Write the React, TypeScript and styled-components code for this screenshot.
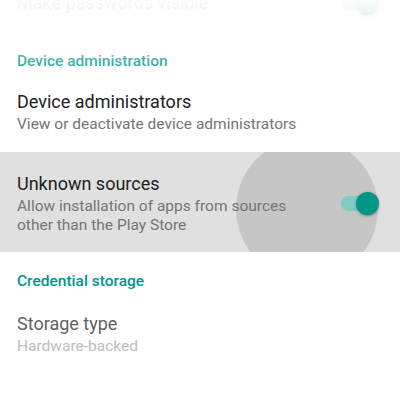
import styled, { createGlobalStyle } from 'styled-components';

const GlobalStyle = createGlobalStyle`
  html, body {
    margin: 0;
    padding: 0;
    background: #fff;
    overflow: hidden;
  }
  body {
    font-family: Roboto, "Noto Sans", sans-serif;
  }
`;

const teal = '#009688';

const Screen = styled.div`
  position: relative;
  width: 400px;
  height: 400px;
  overflow: hidden;
  background: #fff;
`;

const List = styled.div`
  display: flex;
  flex-direction: column;
  margin-top: -28px;
`;

const Row = styled.div<{ $top: number; $bottom: number; $pressed?: boolean }>`
  position: relative;
  display: flex;
  align-items: center;
  padding: ${(p) => p.$top}px 25px ${(p) => p.$bottom}px 17px;
  overflow: hidden;
  background: ${(p) => (p.$pressed ? '#e0e0e0' : 'transparent')};
`;

const TextBlock = styled.div`
  position: relative;
  flex: 1;
  display: flex;
  flex-direction: column;
`;

const Title = styled.div<{ $muted?: boolean }>`
  font-size: 18px;
  line-height: 22px;
  color: ${(p) => (p.$muted ? '#616161' : '#212121')};
`;

const Summary = styled.div<{ $muted?: boolean }>`
  font-size: 15.5px;
  line-height: 18.5px;
  margin-top: 2px;
  color: ${(p) => (p.$muted ? '#bdbdbd' : '#757575')};
  max-width: 290px;
`;

const Category = styled.div<{ $top: number }>`
  padding: ${(p) => p.$top}px 17px 0;
  font-size: 15.5px;
  line-height: 20px;
  font-weight: 500;
  color: ${teal};
`;

const Ripple = styled.div`
  position: absolute;
  left: 236px;
  top: -14px;
  width: 142px;
  height: 142px;
  border-radius: 50%;
  background: #c6c6c6;
`;

const Switch = styled.div<{ $on?: boolean }>`
  position: relative;
  width: 34px;
  height: 15px;
  flex: none;
  border-radius: 8px;
  background: ${(p) => (p.$on ? '#80cbc4' : '#bdbdbd')};
`;

const Thumb = styled.div<{ $on?: boolean }>`
  position: absolute;
  top: -4px;
  left: ${(p) => (p.$on ? '15px' : '-4px')};
  width: 23px;
  height: 23px;
  border-radius: 50%;
  background: ${(p) => (p.$on ? teal : '#f1f1f1')};
  box-shadow: 0 1px 3px rgba(0, 0, 0, 0.35);
`;

const TopFade = styled.div`
  position: absolute;
  left: 0;
  right: 0;
  top: 0;
  height: 95px;
  pointer-events: none;
  background: linear-gradient(
    to bottom,
    rgba(255, 255, 255, 0.98) 0%,
    rgba(255, 255, 255, 0.93) 12%,
    rgba(255, 255, 255, 0.35) 55%,
    rgba(255, 255, 255, 0.1) 80%,
    rgba(255, 255, 255, 0) 100%
  );
`;

export default function App() {
  return (
    <Screen>
      <GlobalStyle />
      <List>
        <Row $top={20} $bottom={20}>
          <TextBlock>
            <Title>Make passwords visible</Title>
          </TextBlock>
          <Switch $on>
            <Thumb $on />
          </Switch>
        </Row>

        <Category $top={17}>Device administration</Category>

        <Row $top={20} $bottom={18.5}>
          <TextBlock>
            <Title>Device administrators</Title>
            <Summary>View or deactivate device administrators</Summary>
          </TextBlock>
        </Row>

        <Row $top={21} $bottom={18} $pressed>
          <Ripple />
          <TextBlock>
            <Title>Unknown sources</Title>
            <Summary>Allow installation of apps from sources other than the Play Store</Summary>
          </TextBlock>
          <Switch $on>
            <Thumb $on />
          </Switch>
        </Row>

        <Category $top={19}>Credential storage</Category>

        <Row $top={22} $bottom={24}>
          <TextBlock>
            <Title $muted>Storage type</Title>
            <Summary $muted>Hardware-backed</Summary>
          </TextBlock>
        </Row>
      </List>
      <TopFade />
    </Screen>
  );
}
